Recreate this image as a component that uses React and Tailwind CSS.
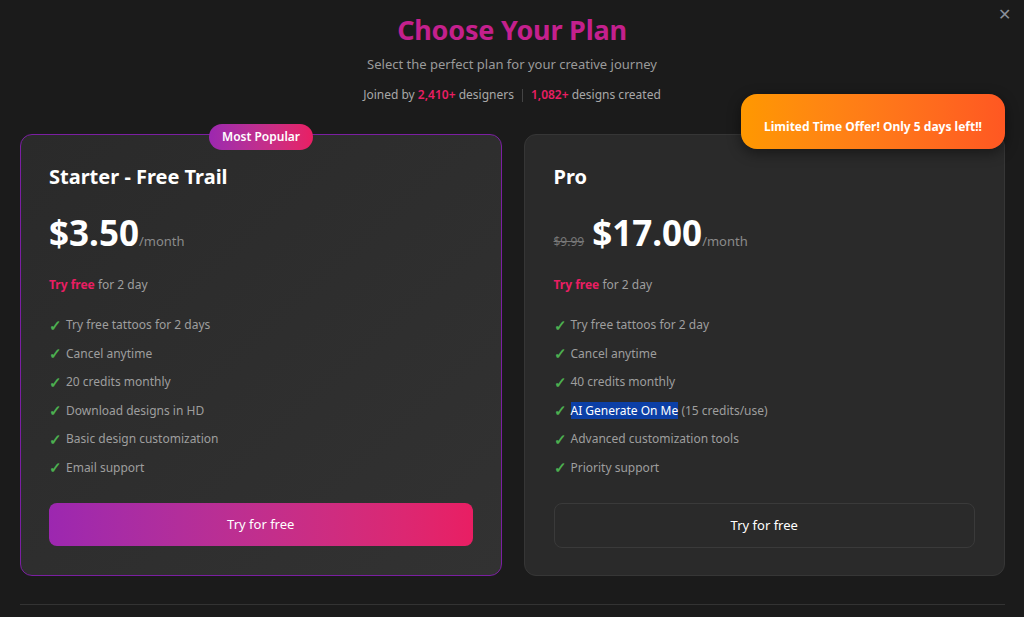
import React from "react";

const Check = () => (
  <span className="text-[#4caf50] text-[15px] font-bold w-[11px] inline-block leading-none">✓</span>
);

function Feature({ children }) {
  return (
    <li className="flex items-center gap-[6px] h-[28.5px] text-[12px] text-[#9e9e9e]">
      <Check />
      <span>{children}</span>
    </li>
  );
}

export default function App() {
  return (
    <div
      className="w-[1024px] h-[617px] bg-[#1b1b1b] relative overflow-hidden"
      style={{ fontFamily: '"Noto Sans", "Open Sans", sans-serif' }}
    >
      <button className="absolute right-[13px] top-[6px] text-[#8a8f98] text-[16px] leading-none">✕</button>

      <div className="flex flex-col items-center pt-[11px]">
        <h1 className="text-[27px] font-bold text-[#c4208d] leading-[38px] tracking-[-0.2px]">Choose Your Plan</h1>
        <p className="mt-[6px] text-[13px] text-[#9a9a9a] leading-[18px]">Select the perfect plan for your creative journey</p>
        <p className="mt-[14px] text-[12px] text-[#a8a8a8] leading-[16px] flex items-center">
          <span>
            Joined by <span className="text-[#e91e63] font-semibold">2,410+</span> designers
          </span>
          <span className="mx-[8px] w-px h-[13px] bg-[#444]"></span>
          <span>
            <span className="text-[#e91e63] font-semibold">1,082+</span> designs created
          </span>
        </p>
      </div>

      <div className="ml-[20px] w-[985px] mt-[31px] grid grid-cols-2 gap-[22px]">
        {/* Starter */}
        <div className="relative h-[442px] rounded-[12px] border border-[#7b1fa2] bg-gradient-to-br from-[#2a2a2a] to-[#323232] px-[28px] pt-[28px]">
          <div className="absolute left-[188px] top-[-11px] h-[26px] px-[13px] rounded-full bg-gradient-to-r from-[#9c27b0] to-[#e91e63] text-white text-[12px] font-semibold flex items-center">
            Most Popular
          </div>
          <h2 className="text-[20px] font-bold text-white leading-[28px]">Starter - Free Trail</h2>
          <div className="mt-[20px] flex items-baseline">
            <span className="text-[35px] font-bold text-white leading-[44px]">$3.50</span>
            <span className="text-[13px] text-[#8a8a8a]">/month</span>
          </div>
          <p className="mt-[21px] text-[12px] text-[#9e9e9e]">
            <span className="text-[#e91e63] font-bold">Try free</span> for 2 day
          </p>
          <ul className="mt-[17px]">
            <Feature>Try free tattoos for 2 days</Feature>
            <Feature>Cancel anytime</Feature>
            <Feature>20 credits monthly</Feature>
            <Feature>Download designs in HD</Feature>
            <Feature>Basic design customization</Feature>
            <Feature>Email support</Feature>
          </ul>
          <button className="mt-[21px] w-full h-[43px] rounded-[8px] bg-gradient-to-r from-[#9c27b0] to-[#e91e63] text-white text-[13px]">
            Try for free
          </button>
        </div>

        {/* Pro */}
        <div className="relative h-[442px] rounded-[12px] border border-[#363636] bg-[#2a2a2a] px-[29px] pt-[28px]">
          <h2 className="text-[20px] font-bold text-white leading-[28px]">Pro</h2>
          <div className="mt-[20px] flex items-baseline">
            <span className="text-[12px] text-[#777] line-through mr-[8px]">$9.99</span>
            <span className="text-[35px] font-bold text-white leading-[44px]">$17.00</span>
            <span className="text-[13px] text-[#8a8a8a]">/month</span>
          </div>
          <p className="mt-[21px] text-[12px] text-[#9e9e9e]">
            <span className="text-[#e91e63] font-bold">Try free</span> for 2 day
          </p>
          <ul className="mt-[17px]">
            <Feature>Try free tattoos for 2 day</Feature>
            <Feature>Cancel anytime</Feature>
            <Feature>40 credits monthly</Feature>
            <Feature>
              <span className="bg-[#0c3fa6] text-white">AI Generate On Me</span> (15 credits/use)
            </Feature>
            <Feature>Advanced customization tools</Feature>
            <Feature>Priority support</Feature>
          </ul>
          <button className="mt-[21px] w-full h-[45px] rounded-[8px] border border-[#3a3a3a] text-white text-[13px]">
            Try for free
          </button>
        </div>
      </div>

      <div className="absolute left-[741px] top-[94px] w-[264px] h-[55px] rounded-[16px] bg-gradient-to-r from-[#ff9800] to-[#ff5722] shadow-[0_4px_14px_rgba(0,0,0,0.45)] flex items-center justify-center pt-[10px]">
        <span className="text-white text-[12px] font-bold">Limited Time Offer! Only 5 days left!!</span>
      </div>

      <div className="ml-[20px] w-[985px] mt-[28px] h-px bg-[#333]"></div>
    </div>
  );
}
